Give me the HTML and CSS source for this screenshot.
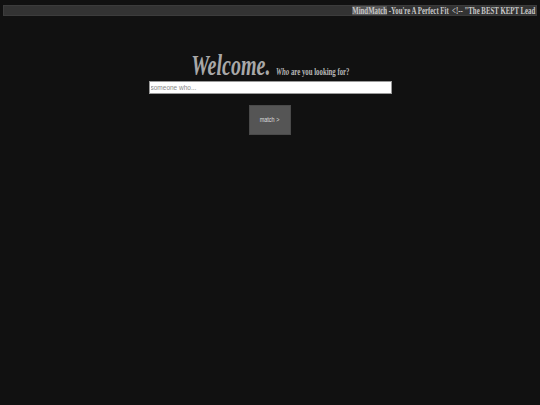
FILE: index.html
```html
<!DOCTYPE html>
<html>
<head>
<meta charset="utf-8">
<link rel="stylesheet" href="styles.css">
</head>
<body>
<div class="topbar">
  <span class="topbar-text"><a class="brand" href="#">MindMatch</a> -You're A Perfect Fit &nbsp;&lt;!-- "The BEST KEPT Lead</span>
</div>
<main class="main">
  <h1 class="heading"><span class="heading-inner"><span class="welcome">Welcome.</span> <span class="sub"><i>Who</i> are you looking for?</span></span></h1>
  <input class="search" type="text" placeholder="someone who...">
  <button class="match"><span class="match-label">match &gt;</span></button>
</main>
</body>
</html>
```
FILE: styles.css
```css
html, body {
  margin: 0;
  padding: 0;
  background: #111111;
  height: 100%;
}
body {
  font-family: "Liberation Serif", "Times New Roman", serif;
  color: #cccccc;
}
.topbar {
  margin: 5px 3px 0;
  height: 9px;
  background: #333333;
  border: 1px solid #3c3c3c;
  display: flex;
  justify-content: flex-end;
  align-items: center;
  overflow: hidden;
}
.topbar-text {
  display: inline-block;
  white-space: nowrap;
  font-weight: bold;
  font-size: 11px;
  line-height: 9px;
  color: #c8c8c8;
  transform: scaleX(0.62);
  transform-origin: right center;
  margin-right: 1px;
}
.brand {
  color: #c8c8c8;
  background: #555555;
  text-decoration: underline;
}
.main {
  display: flex;
  flex-direction: column;
  align-items: center;
  padding-top: 32px;
}
.heading {
  margin: 0;
  font-weight: bold;
  line-height: 1;
  white-space: nowrap;
  text-align: center;
}
.heading-inner {
  display: inline-block;
  transform: scaleX(0.68);
  transform-origin: center;
}
.welcome {
  font-size: 29.5px;
  font-style: italic;
  color: #a8a8a8;
}
.sub {
  font-size: 10px;
  color: #b8b8b8;
}
.search {
  margin-top: 0;
  width: 243px;
  height: 13px;
  box-sizing: border-box;
  border: 1px solid #9a9a9a;
  background: #ffffff;
  padding: 0 1px;
  font-family: "Liberation Sans Narrow", "Liberation Sans", Arial, sans-serif;
  font-size: 6.5px;
  color: #333;
  outline: none;
}
.search::placeholder {
  color: #888888;
}
.match {
  margin-top: 11px;
  width: 42px;
  height: 30px;
  background: #555555;
  border: 1px solid #4a4a4a;
  padding: 0;
  color: #dddddd;
  font-family: "Liberation Sans", Arial, sans-serif;
  font-size: 7px;
}
.match-label {
  display: inline-block;
  transform: scaleX(0.78);
}
```
